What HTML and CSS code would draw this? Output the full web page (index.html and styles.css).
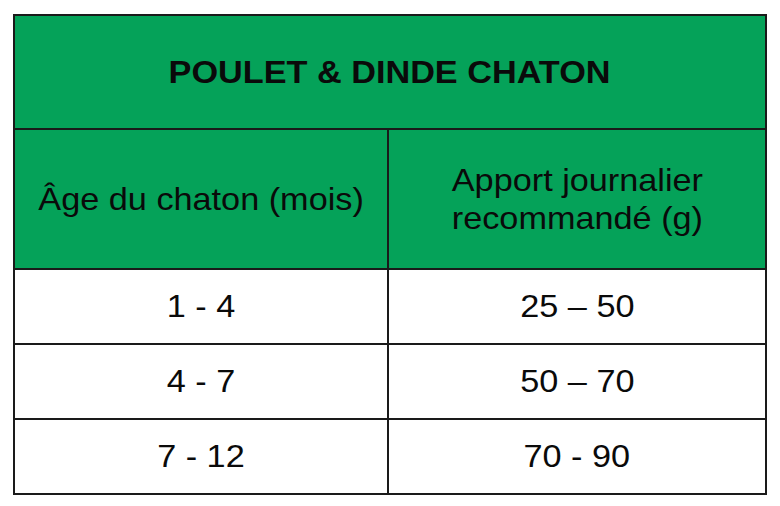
FILE: index.html
```html
<!DOCTYPE html>
<html lang="fr">
<head>
<meta charset="utf-8">
<title>Poulet &amp; Dinde Chaton</title>
<link rel="stylesheet" href="styles.css">
</head>
<body>
<table class="feed">
  <colgroup><col class="c1"><col class="c2"></colgroup>
  <thead>
    <tr class="title-row"><th colspan="2" class="title"><span class="t">POULET &amp; DINDE CHATON</span></th></tr>
    <tr class="head-row">
      <th class="head"><span class="t">Âge du chaton (mois)</span></th>
      <th class="head"><span class="t">Apport journalier<br>recommandé (g)</span></th>
    </tr>
  </thead>
  <tbody>
    <tr class="row"><td><span class="t">1 - 4</span></td><td><span class="t">25 – 50</span></td></tr>
    <tr class="row"><td><span class="t">4 - 7</span></td><td><span class="t">50 – 70</span></td></tr>
    <tr class="row"><td><span class="t">7 - 12</span></td><td><span class="t">70 - 90</span></td></tr>
  </tbody>
</table>
</body>
</html>
```
FILE: styles.css
```css
html, body {
  margin: 0;
  padding: 0;
  background: #ffffff;
}
body {
  padding: 14px 0 0 13px;
  font-family: "Liberation Sans", Arial, sans-serif;
  color: #0a0a0a;
}
.feed {
  border-collapse: collapse;
  table-layout: fixed;
  width: 752px;
}
.c1 { width: 374px; }
.c2 { width: 378px; }
.feed th,
.feed td {
  border: 2px solid #1a1a1a;
  text-align: center;
  vertical-align: middle;
  padding: 0;
  font-size: 32px;
}
.t {
  display: inline-block;
  transform: scaleX(1.07);
}
.feed th {
  background: #05a259;
  font-weight: normal;
}
.title-row { height: 114px; }
.feed th.title {
  font-weight: bold;
}
.head-row { height: 140px; }
.feed th.head {
  line-height: 38px;
}
.row { height: 75px; }
.feed td {
  background: #ffffff;
}
```
